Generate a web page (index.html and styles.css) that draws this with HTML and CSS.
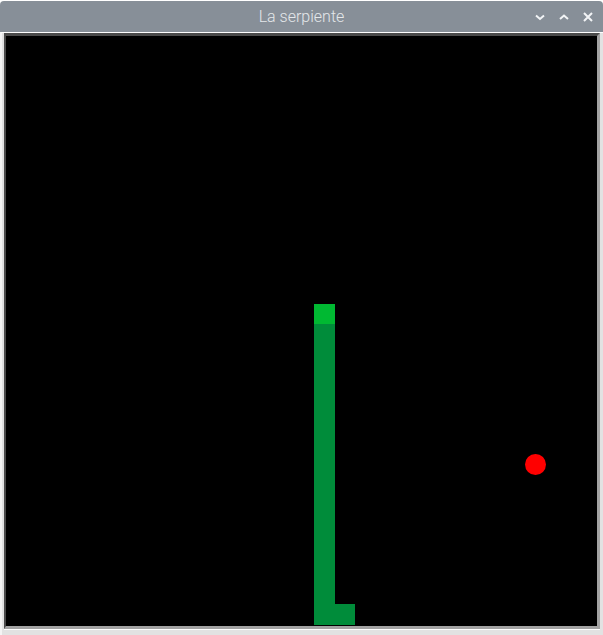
FILE: index.html
```html
<!DOCTYPE html>
<html lang="es">
<head>
<meta charset="utf-8">
<title>La serpiente</title>
<link rel="stylesheet" href="styles.css">
</head>
<body>
<div class="window">
  <div class="titlebar">
    <span class="title">La serpiente</span>
    <div class="controls">
      <svg class="ctl" width="12" height="12" viewBox="0 0 12 12"><path d="M2 4.5 L6 8 L10 4.5" fill="none" stroke="#f2f4f6" stroke-width="2"/></svg>
      <svg class="ctl" width="12" height="12" viewBox="0 0 12 12"><path d="M2 8 L6 4.5 L10 8" fill="none" stroke="#f2f4f6" stroke-width="2"/></svg>
      <svg class="ctl" width="12" height="12" viewBox="0 0 12 12"><path d="M2 2 L10 10 M10 2 L2 10" fill="none" stroke="#f2f4f6" stroke-width="2"/></svg>
    </div>
  </div>
  <div class="frame">
    <div class="board">
      <svg class="field" width="591" height="590" viewBox="0 0 591 590">
        <rect x="308" y="288" width="21" height="301" fill="#008c3a"/>
        <rect x="308" y="568" width="41" height="21" fill="#008c3a"/>
        <rect x="308" y="268" width="21" height="20" fill="#00b932"/>
        <circle cx="529.5" cy="428.5" r="10.5" fill="#ff0000"/>
      </svg>
    </div>
  </div>
</div>
</body>
</html>
```

FILE: styles.css
```css
html, body {
  margin: 0;
  padding: 0;
  background: #ffffff;
}
.window {
  width: 603px;
  height: 635px;
  display: flex;
  flex-direction: column;
  padding-top: 1px;
  box-sizing: border-box;
}
.titlebar {
  height: 31px;
  background: #878f98;
  border-radius: 4px 4px 0 0;
  position: relative;
  display: flex;
  align-items: center;
  justify-content: center;
}
.title {
  font-family: Roboto, "Liberation Sans", sans-serif;
  font-weight: 300;
  font-size: 16px;
  color: #e4e7ea;
  line-height: 1;
  margin-top: 1px;
}
.controls {
  position: absolute;
  right: 9px;
  top: 0;
  height: 100%;
  display: flex;
  align-items: center;
  gap: 12px;
}
.ctl {
  display: block;
}
.frame {
  flex: 1;
  background: #e2e2e2;
  border-top: 1px solid #ffffff;
  border-left: 2px solid #f4f4f4;
  padding: 0 3px 5px 2px;
  display: flex;
}
.board {
  width: 591px;
  height: 590px;
  background: #000000;
  border-style: solid;
  border-width: 3px 3px 3px 2px;
  border-color: #4b4b4b #a3a3a3 #a3a3a3 #4b4b4b;
  box-shadow: 0 1px 0 #ffffff;
}
.field {
  display: block;
}
```
